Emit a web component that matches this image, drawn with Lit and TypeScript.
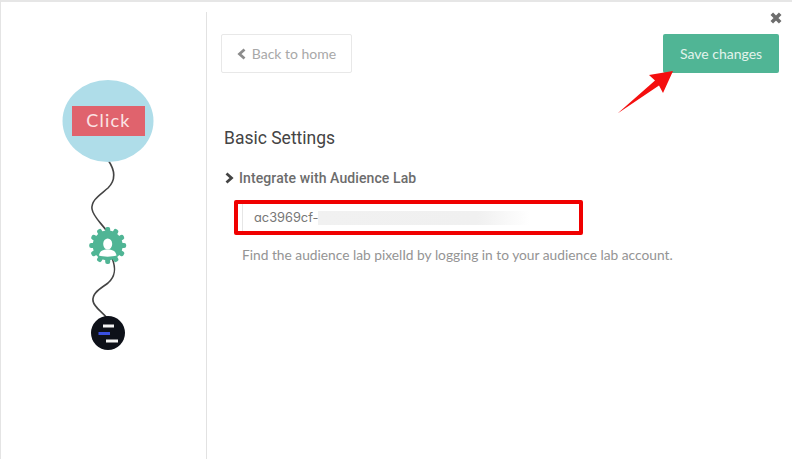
import { LitElement, html, css, svg } from 'lit';
import { customElement } from 'lit/decorators.js';

// teeth of the gear in the flow diagram
const teeth = Array.from({ length: 12 }, (_, i) => i * 30);

@customElement('app-root')
export class AppRoot extends LitElement {
    static styles = css`
    :host{
        display: block;
        width: 792px;
        height: 459px;
        box-sizing: border-box;
        background: #fff;
        border-top: 2px solid #e6e6e6;
        border-left: 1px solid #e4e4e4;
        font-family: Lato, sans-serif;
        overflow: hidden;
    }
    .page{
        display: flex;
        height: 100%;
        padding-top: 10px;
        box-sizing: border-box;
    }
    .side{
        width: 205px;
        flex: none;
        border-right: 1px solid #e2e2e2;
    }
    .side svg{
        display: block;
    }
    .main{
        flex: 1;
        position: relative;
        padding: 22px 13px 0 13px;
    }
    .close{
        position: absolute;
        right: 10px;
        top: 0;
        display: block;
    }
    .top{
        display: flex;
        justify-content: space-between;
        align-items: flex-start;
    }
    .back{
        width: 131px;
        height: 39px;
        margin-left: 1px;
        box-sizing: border-box;
        border: 1px solid #e8e8e8;
        border-radius: 2px;
        display: flex;
        align-items: center;
        justify-content: center;
        gap: 6px;
        font-size: 14px;
        color: #a8a8a8;
    }
    .save{
        width: 116px;
        height: 39px;
        background: #50b595;
        border-radius: 2px;
        color: #e2f3ec;
        font-size: 14px;
        display: flex;
        align-items: center;
        justify-content: center;
    }
    h2{
        margin: 54px 0 0 4px;
        font: 400 17.5px/22px Roboto, sans-serif;
        color: #444;
    }
    .row{
        margin: 19px 0 0 5px;
        display: flex;
        align-items: center;
        gap: 5px;
        font: 500 14px/20px Roboto, sans-serif;
        color: #6c6c6c;
        letter-spacing: 0.1px;
    }
    .field{
        margin: 12px 0 0 14px;
        width: 349px;
        height: 35px;
        box-sizing: border-box;
        border: 4px solid #f00000;
        border-radius: 2px;
        display: flex;
        align-items: center;
        padding-left: 4px;
        font: 400 12.8px Inter, sans-serif;
        font-feature-settings: "cv11";
        color: #777;
        background: #fff;
    }
    .value{
        border-left: 1px solid #e6e6e6;
        height: 100%;
        display: flex;
        align-items: center;
        padding-left: 11px;
    }
    .blur{
        width: 212px;
        height: 14px;
        background: linear-gradient(90deg, #f1f1f1 0%, #f0f0f0 75%, #fff 100%);
    }
    .hint{
        margin: 10px 0 0 22px;
        font-size: 13.75px;
        line-height: 20px;
        color: #949494;
    }
    .arrow{
        position: absolute;
        left: 410px;
        top: 56px;
        display: block;
    }
    `;

    private _flow() {
        return html`
        <svg width="205" height="447" viewBox="1 12 205 447">
            <path d="M108 160 C115 170 116 180 108 188 C100 195 91 200 92 209 C93 216 100 222 106 230" fill="none" stroke="#444" stroke-width="1.6"/>
            <path d="M112 258 C116 268 116 276 108 283 C100 289 92 293 93 301 C94 307 101 311 107 318" fill="none" stroke="#444" stroke-width="1.6"/>
            <ellipse cx="108" cy="121" rx="45.500" ry="41" fill="#afdde9"/>
            <rect x="72" y="106" width="73" height="30" fill="#e0636d"/>
            <text x="108.500" y="127" text-anchor="middle" font-family="Lato, sans-serif" font-size="18" letter-spacing="1.200" fill="#fbe3e4">Click</text>
            <g fill="#50b595">
                ${teeth.map((a) => svg`<rect x="105.200" y="227" width="5" height="8" rx="2" transform="rotate(${a} 107.700 245.500)"/>`)}
                <circle cx="107.700" cy="245.500" r="15"/>
            </g>
            <ellipse cx="107.700" cy="244" rx="4.500" ry="5.500" fill="#fff"/>
            <path d="M99 255.500 C99.500 251 103 249.500 107.700 249.500 C112 249.500 116 251 116.500 255.500 C112 257 103 257 99 255.500 Z" fill="#fff"/>
            <circle cx="108" cy="333" r="17" fill="#0e1119"/>
            <rect x="103" y="324.500" width="11" height="3" fill="#f4f4f4"/>
            <rect x="98.500" y="332" width="11.500" height="3" fill="#3a50e0"/>
            <rect x="106" y="339.500" width="12" height="3" fill="#f4f4f4"/>
        </svg>`;
    }

    render() {
        return html`
        <div class="page">
            <div class="side">${this._flow()}</div>
            <div class="main">
                <svg class="close" width="12" height="12" viewBox="0 0 12 12">
                    <path d="M1.800 1.800 L10.200 10.200 M10.200 1.800 L1.800 10.200" stroke="#6d6d6d" stroke-width="3.600"/>
                </svg>
                <div class="top">
                    <div class="back">
                        <svg width="9" height="12" viewBox="0 0 9 12"><path d="M7.500 1.500 L2.500 6 L7.500 10.500" fill="none" stroke="#8c8c8c" stroke-width="2.800"/></svg>
                        <span>Back to home</span>
                    </div>
                    <div class="save">Save changes</div>
                </div>
                <h2>Basic Settings</h2>
                <div class="row">
                    <svg width="9" height="12" viewBox="0 0 9 12"><path d="M1.500 1.500 L6.500 6 L1.500 10.500" fill="none" stroke="#444" stroke-width="2.800"/></svg>
                    <span>Integrate with Audience Lab</span>
                </div>
                <div class="field">
                    <div class="value">ac3969cf-<div class="blur"></div></div>
                </div>
                <div class="hint">Find the audience lab pixelId by logging in to your audience lab account.</div>
                <svg class="arrow" width="60" height="60" viewBox="0 0 60 60">
                    <path d="M0.500 45.500 L38 12.500 L32 7 L56 3 L46 25 L42 17.500 Z" fill="#f40f0f"/>
                </svg>
            </div>
        </div>`;
    }
}
